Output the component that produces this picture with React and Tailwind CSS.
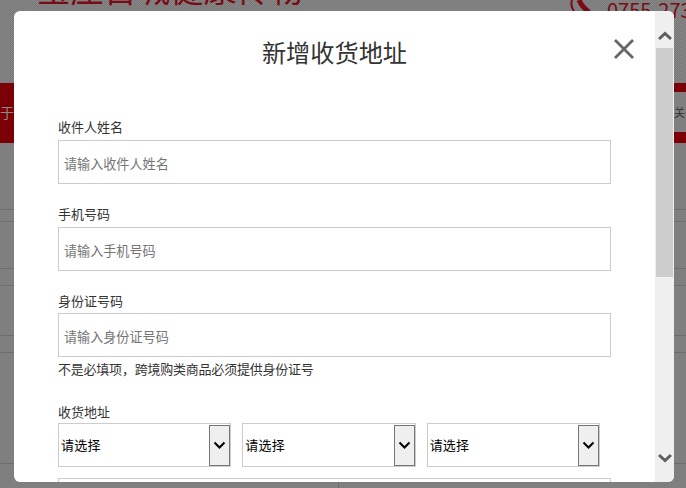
const font = { fontFamily: '"Noto Sans CJK SC", "Liberation Sans", sans-serif' };

function Chevron({ up, className }) {
  return (
    <svg width="14" height="10" viewBox="0 0 14 10" className={className} fill="none">
      <path d={up ? "M1 8 L7 2.5 L13 8" : "M1 2 L7 7.5 L13 2"} stroke="currentColor" strokeWidth="3" />
    </svg>
  );
}

function Field({ label, placeholder, labelClass, inputClass }) {
  return (
    <div className={inputClass}>
      <div className={`h-5 text-[13px] leading-5 text-[#333] ${labelClass}`}>{label}</div>
      <input
        readOnly
        placeholder={placeholder}
        className="block h-[44px] w-[553px] border border-[#ccc] bg-white pl-[5px] pr-[6px] pt-[2px] text-[13.1px] text-[#333] outline-none placeholder:text-[#757575]"
      />
    </div>
  );
}

function Select() {
  return (
    <div className="flex h-[44px] items-center justify-between border border-[#ccc] bg-white">
      <span className="pl-[2px] text-[13px] tracking-[0.2px] text-black">请选择</span>
      <span className="flex h-[41px] w-[21px] items-center justify-center border border-[#767676] bg-[#efefef]">
        <svg width="13" height="9" viewBox="0 0 13 9" fill="none">
          <path d="M1.5 1.5 L6.5 6.5 L11.5 1.5" stroke="#000" strokeWidth="2" />
        </svg>
      </span>
    </div>
  );
}

function Backdrop() {
  const rows = ["h-[67px]", "h-[12px]", "h-[47px]", "h-[17px]", "h-[50px]", "h-[17px]", "h-[111px]"];
  return (
    <div className="h-[488px] overflow-hidden bg-[#7f7f7f]">
      <div className="flex h-[83px] items-start justify-between bg-[repeating-conic-gradient(#7a7a7a_0_25%,#858585_0_50%)] bg-[length:2px_2px] pl-[37px] pr-0">
        <div className="-mt-[32px] whitespace-nowrap text-[33.3px] leading-[40px] text-[#7a0a14]">宝庄百城健康传物</div>
        <div className="flex items-start">
          <svg width="30" height="14" viewBox="0 0 30 14" fill="none" className="mr-[12px]">
            <path d="M7 0 Q5 6 9 11" stroke="#7a0a14" strokeWidth="2" />
            <path d="M14 0 Q17 7 24 12" stroke="#7a0a14" strokeWidth="5" />
          </svg>
          <div className="-mt-[2px] w-[79px] overflow-hidden whitespace-nowrap text-[20px] leading-[24px] text-[#7a0a14]">0755-2733</div>
        </div>
      </div>
      <div className="flex h-[60px] items-start justify-between bg-[#7b0005]">
        <div className="mt-[19px] text-[14px] leading-5 text-[#8c8c8c]">于</div>
        <div className="mt-[9px] h-[40px] w-[12px] overflow-hidden whitespace-nowrap bg-[#7f7f7f] text-[11px] leading-[40px] text-[#333]">关于</div>
      </div>
      {rows.map((r, i) => (
        <div key={i} className={`${r} border-b border-[#6e6e6e]`} />
      ))}
      <div className="h-[30px] w-[339px] border-r border-[#6e6e6e]" />
    </div>
  );
}

export default function App() {
  return (
    <div className="relative h-[488px] w-[686px] overflow-hidden" style={font}>
      <Backdrop />
      <div className="absolute left-[14px] top-[11px] flex h-[471px] w-[660px] overflow-hidden rounded-[6px] bg-white">
        <div className="relative w-[641px] overflow-hidden px-[44px]">
          <div className="h-[106px] pt-[23px] text-center text-[24.2px] leading-[36px] text-[#333]">新增收货地址</div>
          <svg width="22" height="22" viewBox="0 0 22 22" fill="none" className="absolute left-[598.5px] top-[27px]">
            <path d="M2 2 L20 20 M20 2 L2 20" stroke="#666" strokeWidth="2.8" />
          </svg>
          <Field label="收件人姓名" placeholder="请输入收件人姓名" labelClass="mb-[3px]" inputClass="" />
          <Field label="手机号码" placeholder="请输入手机号码" labelClass="mb-[3px]" inputClass="mt-[20px]" />
          <Field label="身份证号码" placeholder="请输入身份证号码" labelClass="mb-[2px]" inputClass="mt-[20px]" />
          <div className="mt-[2px] h-5 text-[13px] leading-5 tracking-[-0.22px] text-[#333]">不是必填项，跨境购类商品必须提供身份证号</div>
          <div className="mt-[23px] mb-px h-5 text-[13px] leading-5 text-[#333]">收货地址</div>
          <div className="grid w-[542px] grid-cols-3 gap-[11px]">
            <Select />
            <Select />
            <Select />
          </div>
          <div className="mt-[11px] h-[44px] w-[553px] border border-[#ccc]" />
        </div>
        <div className="flex w-[19px] flex-col items-center bg-[#efefef] text-[#5f5f5f]">
          <div className="flex h-[37px] items-start pt-[20px]">
            <Chevron up />
          </div>
          <div className="h-[229px] w-[17px] bg-[#cdcdcd]" />
          <div className="flex flex-1 items-end pb-[19px]">
            <Chevron />
          </div>
        </div>
      </div>
    </div>
  );
}
